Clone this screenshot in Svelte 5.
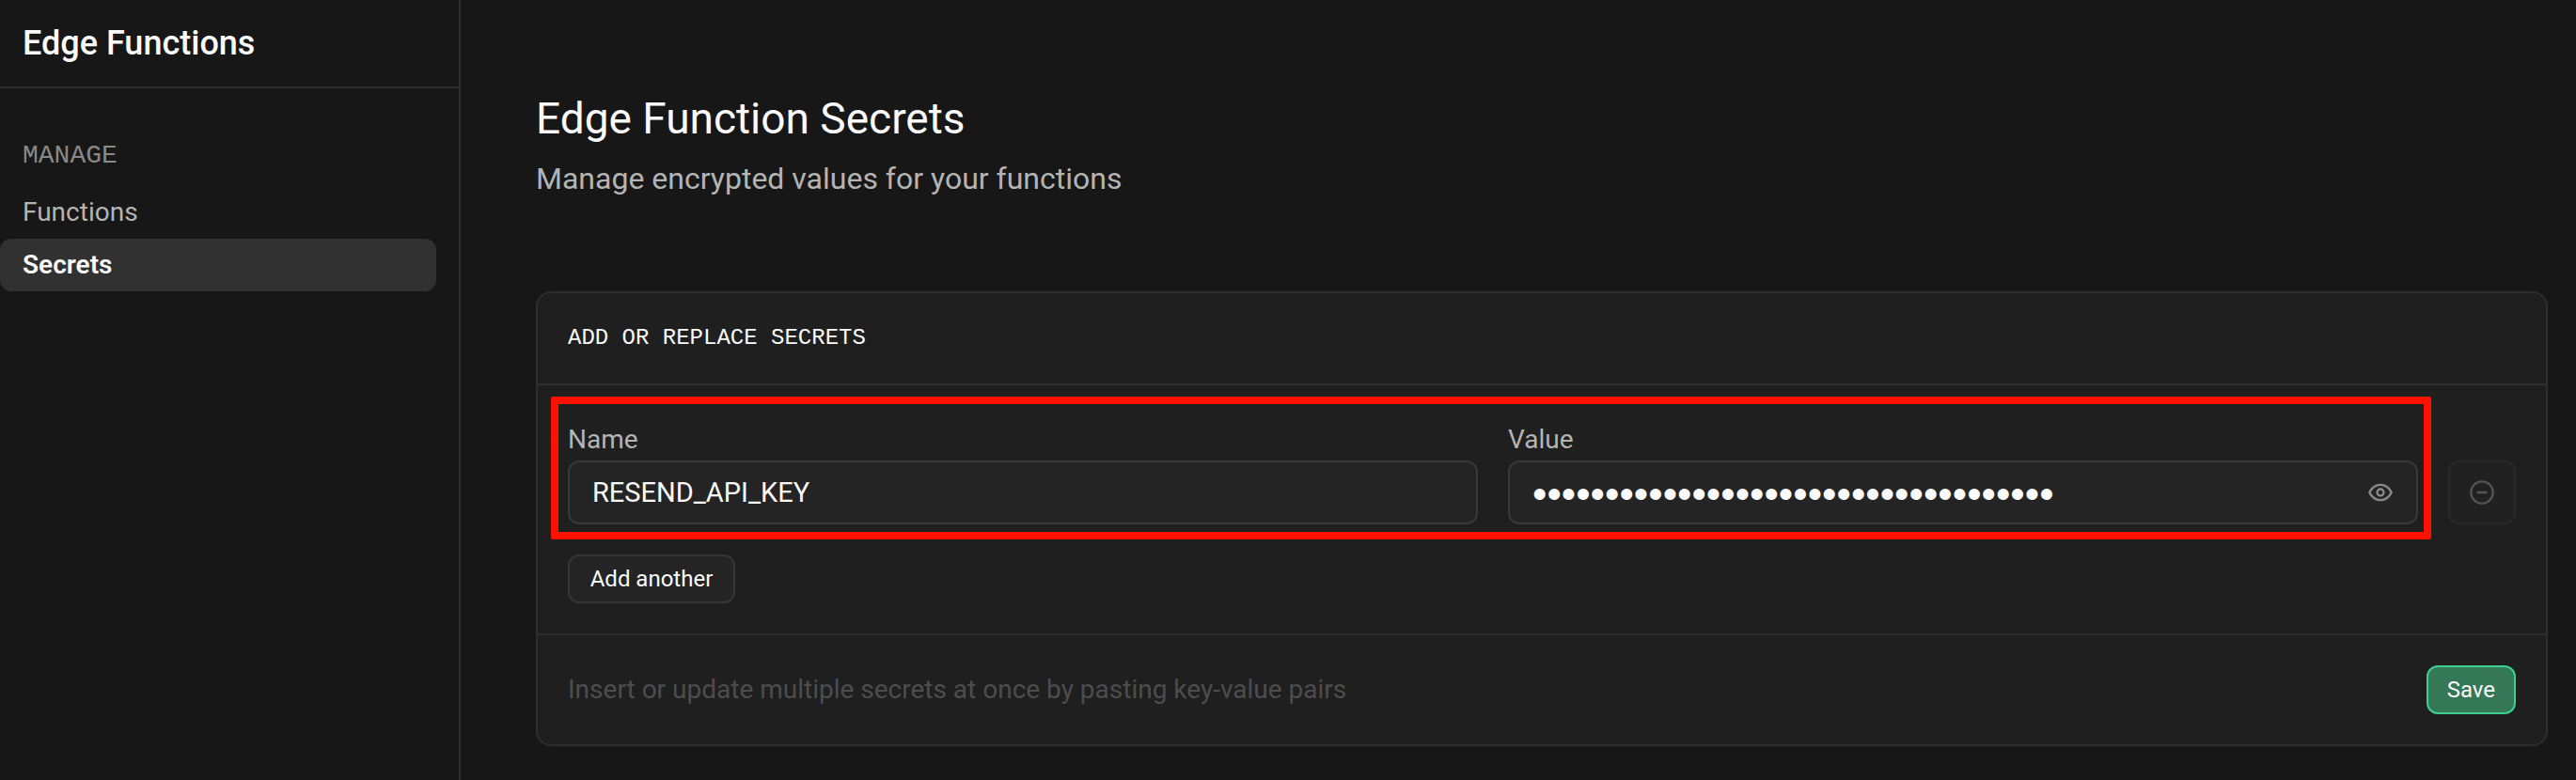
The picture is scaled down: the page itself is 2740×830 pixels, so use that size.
<script>
  let name = $state('RESEND_API_KEY');
  let value = $state('re_00000000_000000000000000000000000');
  let revealed = $state(false);

  const links = [
    { label: 'Functions', active: false },
    { label: 'Secrets', active: true }
  ];
</script>

<div class="page">
  <aside class="sidebar">
    <header class="sidebar-header"><h2>Edge Functions</h2></header>
    <nav class="menu">
      <h3>MANAGE</h3>
      <ul>
        {#each links as link}
          <li>
            <a href="#{link.label.toLowerCase()}" class:active={link.active} aria-current={link.active ? 'page' : undefined}>{link.label}</a>
          </li>
        {/each}
      </ul>
    </nav>
  </aside>

  <main class="content">
    <header class="page-header">
      <h1>Edge Function Secrets</h1>
      <p>Manage encrypted values for your functions</p>
    </header>

    <form class="card" onsubmit={(e) => e.preventDefault()}>
      <div class="card-title">ADD OR REPLACE SECRETS</div>

      <div class="card-body">
        <div class="secret-row">
          <div class="fields">
            <div class="field">
              <label for="secret-name">Name</label>
              <input id="secret-name" type="text" bind:value={name} />
            </div>
            <div class="field">
              <label for="secret-value">Value</label>
              <div class="value-box">
                <input id="secret-value" class:masked={!revealed} type={revealed ? 'text' : 'password'} bind:value />
                <button type="button" class="reveal" aria-label="Show value" onclick={() => (revealed = !revealed)}>
                  <svg viewBox="0 0 24 24" aria-hidden="true">
                    <path d="M2 12s3-7 10-7 10 7 10 7-3 7-10 7-10-7-10-7Z" />
                    <circle cx="12" cy="12" r="3" />
                  </svg>
                </button>
              </div>
            </div>
          </div>
          <button type="button" class="remove" aria-label="Remove secret" disabled>
            <svg viewBox="0 0 24 24" aria-hidden="true">
              <circle cx="12" cy="12" r="10" />
              <path d="M8 12h8" />
            </svg>
          </button>
        </div>
        <button type="button" class="button add">Add another</button>
      </div>

      <footer class="card-footer">
        <p>Insert or update multiple secrets at once by pasting key-value pairs</p>
        <button type="submit" class="button primary">Save</button>
      </footer>
    </form>
  </main>
</div>

<style>
  :global(body) {
    margin: 0;
    background: #171717;
  }
  .page {
    display: flex;
    min-height: 100vh;
    color: #fafafa;
    font-family: Roboto, "Liberation Sans", sans-serif;
    font-size: 28px;
    line-height: 40px;
  }
  h1, h2, h3, p, ul {
    margin: 0;
    padding: 0;
    font-weight: 400;
  }
  ul {
    list-style: none;
  }
  button, input {
    box-sizing: border-box;
    margin: 0;
    font: inherit;
    color: inherit;
  }
  svg {
    display: block;
    width: 28px;
    height: 28px;
    fill: none;
    stroke: currentColor;
    stroke-width: 2;
    stroke-linecap: round;
    stroke-linejoin: round;
  }

  .sidebar {
    box-sizing: border-box;
    flex: 0 0 490px;
    border-right: 2px solid #2e2e2e;
  }
  .sidebar-header {
    display: flex;
    align-items: center;
    height: 92px;
    padding: 0 24px;
    border-bottom: 2px solid #2e2e2e;
  }
  h2 {
    font-size: 36px;
    font-weight: 500;
  }
  .menu {
    padding: 52px 24px 48px 0;
  }
  h3 {
    padding: 0 24px 12px;
    color: #898989;
    font-family: "Liberation Mono", monospace;
    font-size: 28px;
  }
  .menu a {
    display: block;
    padding: 8px 24px;
    border-radius: 12px;
    color: #b4b4b4;
    text-decoration: none;
  }
  .menu a.active {
    background: #313131;
    color: #fafafa;
    font-weight: 600;
  }

  .content {
    flex: 1;
    min-width: 0;
    padding: 94px 30px 34px 80px;
  }
  .page-header {
    padding-bottom: 96px;
  }
  h1 {
    font-size: 46px;
    line-height: 64px;
  }
  .page-header p {
    padding-top: 8px;
    color: #b4b4b4;
    font-size: 32px;
    line-height: 48px;
  }

  .card {
    border: 2px solid #2e2e2e;
    border-radius: 16px;
    background: #1f1f1f;
  }
  .card-title {
    padding: 28px 32px;
    border-bottom: 2px solid #2e2e2e;
    font-family: "Liberation Mono", monospace;
    font-size: 24px;
  }
  .card-body {
    padding: 12px 32px 32px;
  }
  .secret-row {
    display: flex;
    align-items: flex-end;
    gap: 18px;
    margin-left: -18px;
    padding-bottom: 16px;
  }
  .fields {
    flex: 1;
    display: grid;
    grid-template-columns: 1fr 1fr;
    gap: 32px;
    padding: 18px 6px 8px 10px;
    border: 8px solid #ff1100;
    border-radius: 2px;
  }
  .field {
    display: flex;
    flex-direction: column;
    gap: 2px;
    min-width: 0;
  }
  label {
    color: #b4b4b4;
  }
  input {
    width: 100%;
    height: 68px;
    padding: 0 24px;
    border: 2px solid #393939;
    border-radius: 12px;
    background: #242424;
    font-size: 29px;
    outline: none;
  }
  .value-box {
    position: relative;
  }
  .value-box input {
    display: block;
    padding-right: 72px;
  }
  .masked {
    padding-top: 4px;
    font-family: "Liberation Sans", sans-serif;
    font-size: 44px;
  }
  .reveal {
    position: absolute;
    top: 0;
    bottom: 0;
    right: 26px;
    padding: 0;
    border: 0;
    background: none;
    color: #898989;
  }
  .remove {
    display: flex;
    align-items: center;
    justify-content: center;
    width: 72px;
    height: 68px;
    margin-bottom: 16px;
    padding: 0;
    border: 2px solid #292929;
    border-radius: 12px;
    background: #212121;
    color: #545454;
  }
  .button {
    height: 52px;
    padding: 0 20px;
    border: 2px solid #363636;
    border-radius: 12px;
    background: #242424;
    font-size: 24px;
    line-height: 32px;
  }
  .add {
    min-width: 178px;
  }
  .primary {
    border-color: #3ecf8e;
    background: #347857;
  }
  .card-footer {
    display: flex;
    align-items: center;
    justify-content: space-between;
    padding: 32px;
    border-top: 2px solid #2e2e2e;
  }
  .card-footer p {
    color: #4d4d4d;
  }
</style>
